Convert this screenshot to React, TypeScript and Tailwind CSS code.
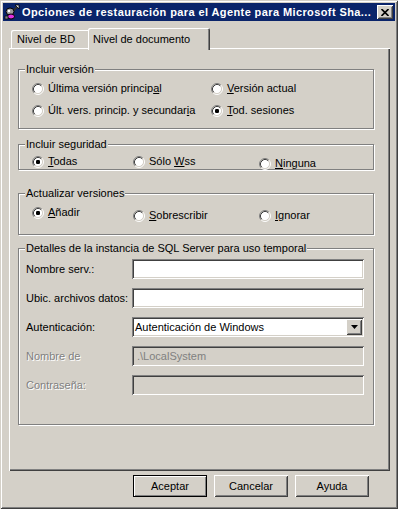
import React from 'react';

const raised =
  'shadow-[inset_1px_1px_#fff,inset_-1px_-1px_#404040,inset_2px_2px_#d4d0c8,inset_-2px_-2px_#808080]';
const sunken =
  'shadow-[inset_1px_1px_#808080,inset_-1px_-1px_#fff,inset_2px_2px_#404040,inset_-2px_-2px_#d4d0c8]';

function RadioDot({ checked }: { checked?: boolean }) {
  return (
    <svg width="12" height="12" viewBox="0 0 12 12" className="shrink-0">
      <circle cx="6" cy="6" r="4.5" fill="#fff" />
      <path d="M2.11 9.89A5.5 5.5 0 0 1 9.89 2.11" fill="none" stroke="#808080" />
      <path d="M9.89 2.11A5.5 5.5 0 0 1 2.11 9.89" fill="none" stroke="#fff" />
      <path d="M2.82 9.18A4.5 4.5 0 0 1 9.18 2.82" fill="none" stroke="#404040" />
      <path d="M9.18 2.82A4.5 4.5 0 0 1 2.82 9.18" fill="none" stroke="#d4d0c8" />
      {checked && <rect x="4" y="4" width="4" height="4" rx="1.2" fill="#000" />}
    </svg>
  );
}

const Radio: React.FC<{ checked?: boolean; className?: string; children: React.ReactNode }> = ({
  checked,
  className = '',
  children,
}) => (
  <div className={`flex items-center gap-[4px] h-[13px] ${className}`}>
    <RadioDot checked={checked} />
    <span className="whitespace-nowrap">{children}</span>
  </div>
);

const Group: React.FC<{ title: string; className?: string; children: React.ReactNode }> = ({
  title,
  className = '',
  children,
}) => (
  <fieldset
    className={`w-[356px] border border-[#808080] shadow-[inset_1px_1px_#fff,1px_1px_#fff] ${className}`}
  >
    <legend className="ml-[6px] px-[1px] bg-[#d4d0c8] leading-[13px]">{title}</legend>
    {children}
  </fieldset>
);

const Field: React.FC<{ label: string; disabled?: boolean; value?: string }> = ({ label, disabled, value }) => (
  <div className="flex items-center h-[20px]">
    <span
      className={`w-[106px] whitespace-nowrap ${
        disabled ? 'text-[#808080] [text-shadow:1px_1px_0_#fff]' : ''
      }`}
    >
      {label}
    </span>
    <div
      className={`w-[232px] h-[20px] flex items-center pl-[5px] ${sunken} ${
        disabled ? 'bg-[#d4d0c8] text-[#808080]' : 'bg-white'
      }`}
    >
      {value}
    </div>
  </div>
);

const Button: React.FC<{ primary?: boolean; children: React.ReactNode }> = ({ primary, children }) => (
  <button
    className={`w-[74px] h-[22px] bg-[#d4d0c8] text-black ${
      primary
        ? 'border border-black shadow-[inset_1px_1px_#fff,inset_-1px_-1px_#808080]'
        : raised
    }`}
  >
    {children}
  </button>
);

export default function App() {
  return (
    <div
      className="w-[398px] h-[509px] p-[3px] bg-[#d4d0c8] text-black text-[11px] leading-[13px] font-['Liberation_Sans',Arial,sans-serif] shadow-[inset_1px_1px_#d4d0c8,inset_-1px_-1px_#404040,inset_2px_2px_#fff,inset_-2px_-2px_#808080] overflow-hidden"
    >
      {/* title bar */}
      <div className="flex items-center h-[18px] bg-[#0a246a] pl-[1px] pr-[2px] gap-[2px]">
        <svg width="16" height="16" viewBox="0 0 16 16" className="shrink-0">
          <path d="M8 8 L14 2" stroke="#303030" strokeWidth="2" />
          <path d="M11 1 h4 v4 z" fill="#e0e0e0" stroke="#000" strokeWidth="0.8" />
          <ellipse cx="6" cy="7.5" rx="4" ry="3.5" fill="#9a9a9a" stroke="#000" strokeWidth="1" />
          <circle cx="5" cy="7" r="1.2" fill="#fff" />
          <ellipse cx="7" cy="12.5" rx="3.5" ry="2.5" fill="#e030e0" stroke="#000" strokeWidth="1" />
          <rect x="1" y="12" width="3" height="3" fill="#808080" stroke="#000" strokeWidth="0.6" />
        </svg>
        <span className="flex-1 text-white font-bold tracking-[0.4px] whitespace-nowrap overflow-hidden">
          Opciones de restauración para el Agente para Microsoft Sha...
        </span>
        <div className={`w-[16px] h-[14px] bg-[#d4d0c8] flex items-center justify-center ${raised}`}>
          <svg width="8" height="7" viewBox="0 0 8 7">
            <path d="M0.5 0 L7.5 7 M7.5 0 L0.5 7" stroke="#000" strokeWidth="1.6" />
          </svg>
        </div>
      </div>

      {/* tabs */}
      <div className="mt-[7px] ml-[6px] pl-[2px] flex items-end h-[22px] -mb-[2px]">
        <div className="w-[77px] h-[18px] mb-[2px] pl-[6px] pt-[3px] rounded-tl-[2px] shadow-[inset_1px_1px_#fff]">
          Nivel de BD
        </div>
        <div className="relative z-10 w-[122px] h-[22px] pl-[5px] pt-[5px] bg-[#d4d0c8] rounded-t-[2px] shadow-[inset_1px_1px_#fff,inset_-1px_0_#404040,inset_-2px_0_#808080]">
          Nivel de documento
        </div>
      </div>

      {/* panel */}
      <div className="ml-[6px] w-[381px] h-[423px] pt-[15px] pl-[9px] shadow-[inset_1px_1px_#fff,inset_-1px_-1px_#404040,inset_-2px_-2px_#808080]">
        <Group title="Incluir versión" className="h-[66px]">
          <div className="grid grid-cols-[179px_1fr] gap-y-[9px] pt-[6px] pl-[13px]">
            <Radio>
              Última versión princip<u>a</u>l
            </Radio>
            <Radio>
              <u>V</u>ersión actual
            </Radio>
            <Radio>
              Últ. vers. princip. y secundar<u>i</u>a
            </Radio>
            <Radio checked>
              <u>T</u>od. sesiones
            </Radio>
          </div>
        </Group>

        <Group title="Incluir seguridad" className="h-[32px] mt-[9px]">
          <div className="flex items-start pt-[4px] pl-[13px]">
            <Radio checked className="w-[101px]">
              <u>T</u>odas
            </Radio>
            <Radio className="w-[126px]">
              Sólo <u>W</u>ss
            </Radio>
            <Radio className="mt-[2px]">
              <u>N</u>inguna
            </Radio>
          </div>
        </Group>

        <Group title="Actualizar versiones" className="h-[48px] mt-[17px]">
          <div className="flex items-start pt-[6px] pl-[13px]">
            <Radio checked className="w-[101px]">
              <u>A</u>ñadir
            </Radio>
            <Radio className="w-[126px] mt-[3px]">
              <u>S</u>obrescribir
            </Radio>
            <Radio className="mt-[3px]">
              <u>I</u>gnorar
            </Radio>
          </div>
        </Group>

        <Group title="Detalles de la instancia de SQL Server para uso temporal" className="h-[183px] mt-[7px]">
          <div className="flex flex-col gap-[9px] pt-[4px] pl-[7px]">
            <Field label="Nombre serv.:" />
            <Field label="Ubic. archivos datos:" />
            <div className="flex items-center h-[20px]">
              <span className="w-[106px]">Autenticación:</span>
              <div className={`w-[232px] h-[20px] flex items-center justify-between bg-white pl-[3px] pr-[2px] ${sunken}`}>
                <span>Autenticación de Windows</span>
                <div className={`w-[16px] h-[16px] bg-[#d4d0c8] flex items-center justify-center ${raised}`}>
                  <svg width="7" height="4" viewBox="0 0 7 4">
                    <path d="M0 0 H7 L3.5 4 Z" fill="#000" />
                  </svg>
                </div>
              </div>
            </div>
            <Field label="Nombre de" disabled value=".\LocalSystem" />
            <Field label="Contraseña:" disabled />
          </div>
        </Group>
      </div>

      {/* buttons */}
      <div className="mt-[4px] flex justify-end gap-[7px] pr-[26px]">
        <Button primary>Aceptar</Button>
        <Button>Cancelar</Button>
        <Button>Ayuda</Button>
      </div>
    </div>
  );
}
